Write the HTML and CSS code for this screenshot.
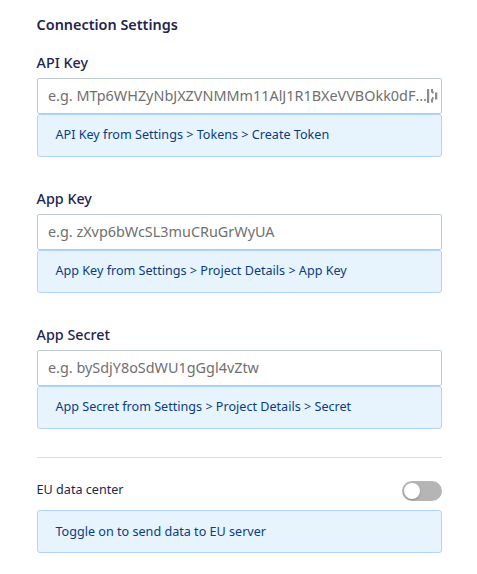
FILE: index.html
```html
<!DOCTYPE html>
<html lang="en">
<head>
<meta charset="utf-8">
<title>Connection Settings</title>
<link rel="stylesheet" href="styles.css">
</head>
<body>
<main class="settings">
  <h1 class="title">Connection Settings</h1>
  <section class="field">
    <label class="label" for="api">API Key</label>
    <div class="control">
      <input class="input" id="api" type="text" placeholder="e.g. MTp6WHZyNbJXZVNMMm11AlJ1R1BXeVVBOkk0dFRhbmdv">
      <svg class="manager" width="12" height="16" viewBox="0 0 12 16" fill="#8c8c8c"><path d="M0 1h2.2v14H0zM4 1h2v3.6H4zM5 3h1.6v2.6H5zM4 10.8h2v3.7H4zM5 9h1.6v2.6H5zM8 4.5h2.3v7H8z"/></svg>
    </div>
    <p class="hint">API Key from Settings &gt; Tokens &gt; Create Token</p>
  </section>
  <section class="field">
    <label class="label" for="app">App Key</label>
    <div class="control"><input class="input" id="app" type="text" placeholder="e.g. zXvp6bWcSL3muCRuGrWyUA"></div>
    <p class="hint">App Key from Settings &gt; Project Details &gt; App Key</p>
  </section>
  <section class="field">
    <label class="label" for="secret">App Secret</label>
    <div class="control"><input class="input" id="secret" type="text" placeholder="e.g. bySdjY8oSdWU1gGgl4vZtw"></div>
    <p class="hint">App Secret from Settings &gt; Project Details &gt; Secret</p>
  </section>
  <section class="region">
    <div class="row"><span class="row-label">EU data center</span><span class="toggle" role="switch" aria-checked="false"></span></div>
    <p class="hint region-hint">Toggle on to send data to EU server</p>
  </section>
</main>
</body>
</html>
```
FILE: styles.css
```css
* { box-sizing: border-box; }
body { margin: 0; background: #fff; color: #1f2450; font-family: "Noto Sans", sans-serif; }
.settings { width: 405px; margin-left: 37px; padding-top: 15px; }
.title { margin: 0 0 17px; font-size: 14.4px; line-height: 20px; font-weight: 600; text-indent: -.4px; }
.field { height: 105px; margin-bottom: 31px; }
.label { display: block; height: 26px; font-size: 14.3px; line-height: 22px; font-weight: 500; text-indent: -.4px; }
.control { position: relative; height: 36px; }
.input { display: block; width: 100%; height: 36px; padding: 0 14px 2px 10px; border: 1px solid #c0cad3; border-radius: 2px; background: #fff; font: 14.4px "Noto Sans", sans-serif; text-overflow: ellipsis; }
.input::placeholder { color: #6f6f6f; text-overflow: ellipsis; }
.manager { position: absolute; right: 3px; top: 10px; }
.hint { height: 43px; margin: 0; padding: 0 17.5px; border: 1px solid #b0d4ff; border-radius: 3px; background: #e7f4fe; color: #0a3c82; font-size: 12.6px; line-height: 39px; }
.region-hint { line-height: 41px; }
.region { border-top: 1px solid #dcdcdc; padding-top: 22px; margin-top: -3px; }
.row { display: flex; justify-content: space-between; align-items: center; height: 22px; margin-bottom: 8px; }
.row-label { padding-bottom: 3px; font-size: 12.6px; text-indent: -.4px; }
.toggle { display: flex; align-items: center; width: 40px; height: 20px; padding: 2px; border-radius: 10px; background: #b5b5b5; }
.toggle::before { content: ""; width: 16px; height: 16px; border-radius: 50%; background: #fff; box-shadow: 0 1px 2px rgba(0, 0, 0, .25); }
```
